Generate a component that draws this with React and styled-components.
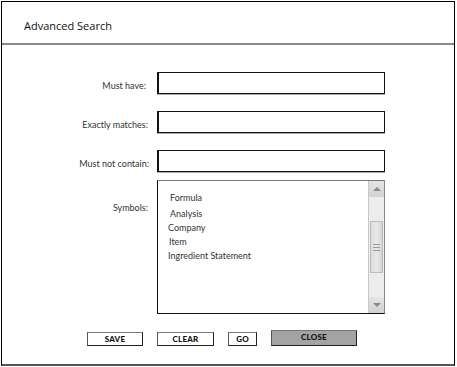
import styled, { createGlobalStyle } from "styled-components"

const Global = createGlobalStyle`
  html, body {
    margin: 0;
    padding: 0;
    background: #fff;
  }
  * {
    box-sizing: border-box;
  }
`

const Frame = styled.div`
  width: 454px;
  margin: 1px 0 0 1px;
  border: 1px solid #000;
  border-bottom: 2px solid #555;
  background: #fff;
  font-family: Lato, "Liberation Sans", sans-serif;
  color: #222;
`

const Header = styled.div`
  height: 43px;
  border-bottom: 2px solid #888;
  display: flex;
  align-items: center;
  padding: 5px 0 0 22px;
  font-family: "Open Sans", "Liberation Sans", sans-serif;
  font-size: 11px;
  color: #111;
`

const Body = styled.div`
  padding: 27px 0 18px 0;
`

const Row = styled.div`
  display: grid;
  grid-template-columns: 147px 228px;
  column-gap: 8px;
  align-items: start;
  margin-top: ${(p) => p.$mt || 0}px;
`

const Label = styled.div`
  text-align: right;
  font-size: 9px;
  line-height: 14px;
  padding-top: ${(p) => p.$pt ?? 7}px;
  padding-right: ${(p) => p.$pr || 0}px;
  color: #333;
`

const TextBox = styled.div`
  height: 22px;
  border: 1px solid #111;
  border-left-width: 2px;
  box-shadow: 0 1px 0 #aaa;
  background: #fff;
`

const ListBox = styled.div`
  height: 134px;
  display: flex;
  border: 1px solid #111;
  border-top-color: #777;
  border-right-color: #888;
  background: #fff;
`

const List = styled.div`
  flex: 1;
  padding: 10px 0 0 10px;
`

const ListItem = styled.div`
  font-size: 9px;
  line-height: 14px;
  padding-left: ${(p) => p.$indent || 0}px;
  margin-bottom: ${(p) => p.$gap || 0}px;
  color: #333;
`

const Track = styled.div`
  width: 16px;
  display: flex;
  flex-direction: column;
  background: #ededed;
  border-left: 1px solid #c8c8c8;
`

const Arrow = styled.div`
  height: 16px;
  display: flex;
  align-items: center;
  justify-content: center;
  background: linear-gradient(#e4e4e4, #d2d2d2);
  margin-top: ${(p) => (p.$down ? "auto" : "0")};

  &::after {
    content: "";
    border-left: 4px solid transparent;
    border-right: 4px solid transparent;
    ${(p) =>
      p.$down
        ? "border-top: 4px solid #8a8a8a;"
        : "border-bottom: 4px solid #8a8a8a;"}
  }
`

const Thumb = styled.div`
  height: 52px;
  margin: 24px 1px 0 1px;
  border: 1px solid #bcbcbc;
  background: linear-gradient(90deg, #dcdcdc, #e8e8e8, #d6d6d6);
  display: flex;
  flex-direction: column;
  align-items: center;
  justify-content: center;
  gap: 2px;
`

const Grip = styled.span`
  width: 7px;
  height: 1px;
  background: #999;
`

const Buttons = styled.div`
  display: flex;
  align-items: flex-end;
  gap: 14px;
  padding-left: 85px;
  margin-top: 16px;
`

const Button = styled.div`
  width: ${(p) => p.$w}px;
  height: ${(p) => (p.$primary ? 16 : 14)}px;
  border: 1px solid #222;
  border-top-color: #777;
  border-left-color: #555;
  background: ${(p) => (p.$primary ? "#a3a3a3" : "#fff")};
  display: flex;
  align-items: center;
  justify-content: center;
  font-size: 8px;
  font-weight: 900;
  color: #111;
  letter-spacing: 0.2px;
  padding-bottom: ${(p) => (p.$primary ? 2 : 0)}px;
`

const fields = [
  { label: "Must have:", mt: 0, pr: 3 },
  { label: "Exactly matches:", mt: 17, pr: 1 },
  { label: "Must not contain:", mt: 17, pr: 0 },
]

const symbols = [
  { name: "Formula", indent: 2, gap: 2 },
  { name: "Analysis", indent: 2 },
  { name: "Company", indent: 0 },
  { name: "Item", indent: 1 },
  { name: "Ingredient Statement", indent: 0 },
]

export default function App() {
  return (
    <>
      <Global />
      <Frame>
        <Header>Advanced Search</Header>
        <Body>
          {fields.map((f) => (
            <Row key={f.label} $mt={f.mt}>
              <Label $pr={f.pr}>{f.label}</Label>
              <TextBox />
            </Row>
          ))}
          <Row $mt={8}>
            <Label $pt={21} $pr={1}>
              Symbols:
            </Label>
            <ListBox>
              <List>
                {symbols.map((s) => (
                  <ListItem key={s.name} $indent={s.indent} $gap={s.gap}>
                    {s.name}
                  </ListItem>
                ))}
              </List>
              <Track>
                <Arrow />
                <Thumb>
                  <Grip />
                  <Grip />
                  <Grip />
                </Thumb>
                <Arrow $down />
              </Track>
            </ListBox>
          </Row>
          <Buttons>
            <Button $w={56}>SAVE</Button>
            <Button $w={57}>CLEAR</Button>
            <Button $w={29}>GO</Button>
            <Button $w={86} $primary>
              CLOSE
            </Button>
          </Buttons>
        </Body>
      </Frame>
    </>
  )
}
